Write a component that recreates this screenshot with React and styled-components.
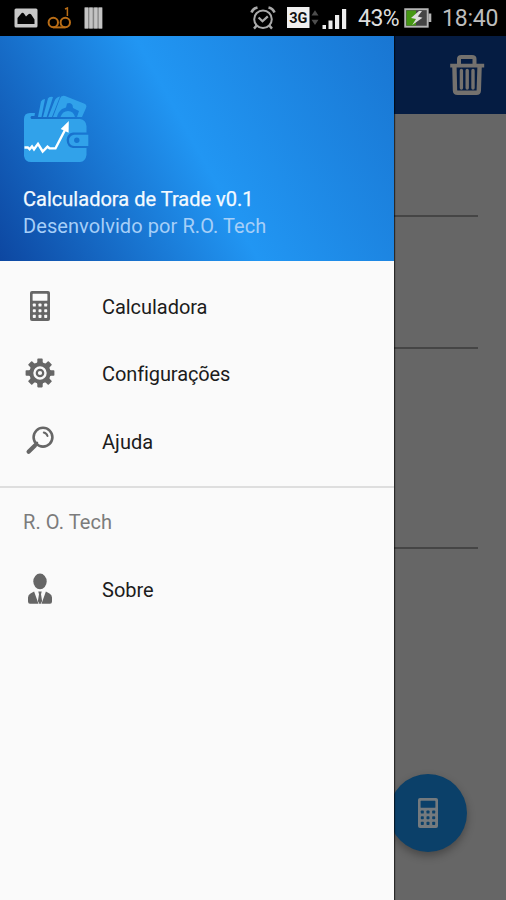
import React from "react";
import styled, { createGlobalStyle } from "styled-components";

const GlobalStyle = createGlobalStyle`
  * { box-sizing: border-box; }
  body { margin: 0; background: #000; font-family: Roboto, "Noto Sans", sans-serif; }
`;

const Screen = styled.div`
  width: 506px;
  height: 900px;
  overflow: hidden;
  display: flex;
  flex-direction: column;
`;

const StatusBar = styled.header`
  height: 36px;
  flex: none;
  background: #000;
  color: #c6c6c6;
  display: flex;
  align-items: center;
  justify-content: space-between;
  padding: 0 8px 0 14px;
`;

const StatusGroup = styled.div`
  display: flex;
  align-items: center;
  height: 36px;
`;

const StatusText = styled.span`
  font-size: 23px;
  line-height: 36px;
  padding-top: 1px;
  width: ${(p) => p.$width}px;
  margin-left: ${(p) => p.$gap}px;
  letter-spacing: ${(p) => p.$spacing || 0}px;
  color: ${(p) => p.$color || "#bdbdbd"};
  white-space: nowrap;
`;

const Glyph = styled.svg`
  display: block;
  flex: none;
  margin-left: ${(p) => p.$gap || 0}px;
`;

const Stage = styled.main`
  position: relative;
  flex: 1;
  background: #666;
`;

const AppBar = styled.div`
  height: 78px;
  background: #051c42;
  display: flex;
  align-items: center;
  justify-content: flex-end;
  padding-right: 20px;
`;

const Form = styled.div`
  display: flex;
  flex-direction: column;
  padding: 0 28px;
`;

const Field = styled.div`
  height: ${(p) => p.$height}px;
  border-bottom: 2px solid #454545;
`;

const Fab = styled.button`
  position: absolute;
  right: 39px;
  bottom: 48px;
  width: 78px;
  height: 78px;
  padding: 0;
  border: 0;
  border-radius: 50%;
  background: #0b4069;
  display: flex;
  align-items: center;
  justify-content: center;
  box-shadow: 0 4px 8px rgba(0, 0, 0, 0.3);
`;

const Drawer = styled.aside`
  position: absolute;
  top: 0;
  left: 0;
  bottom: 0;
  width: 394px;
  background: #fafafa;
  box-shadow: 1px 0 1px rgba(0, 0, 0, 0.6);
`;

const DrawerHeader = styled.div`
  height: 225px;
  padding: 58px 23px 0;
  background: linear-gradient(61deg, #0d47a1 0%, #2196f3 50%, #1976d2 100%);
`;

const AppTitle = styled.div`
  margin-top: 23px;
  font-size: 20px;
  line-height: 27px;
  -webkit-text-stroke: 0.25px #f4faff;
  letter-spacing: 0.02px;
  color: #f4faff;
  white-space: nowrap;
`;

const AppAuthor = styled.div`
  font-size: 20px;
  line-height: 27px;
  letter-spacing: 0.08px;
  color: #a6cff8;
  white-space: nowrap;
`;

const Menu = styled.nav`
  display: flex;
  flex-direction: column;
  padding-top: ${(p) => p.$top}px;
`;

const MenuItem = styled.a`
  height: 67.5px;
  padding-left: 24px;
  display: flex;
  align-items: center;
`;

const MenuLabel = styled.span`
  margin-left: 46px;
  padding-top: 2px;
  font-size: 20px;
  line-height: 28px;
  letter-spacing: ${(p) => p.$spacing}px;
  color: #1c1c1c;
`;

const Divider = styled.hr`
  margin: 11px 0 0;
  border: 0;
  height: 2px;
  background: #dedede;
`;

const SectionLabel = styled.div`
  padding: 19px 23px 0;
  font-size: 20px;
  line-height: 30px;
  letter-spacing: 0.08px;
  color: #7c7c7c;
`;

const CalculatorIcon = ({ color, hole }) => (
  <Glyph width="32" height="32" viewBox="0 0 32 32">
    <rect x="6" y="1" width="20" height="30" rx="2" fill={color} />
    <rect x="8.6" y="3.8" width="14.8" height="7" rx="0.6" fill={hole} />
    {[13.5, 19.2, 24.8].map((y) =>
      [8.8, 14.5, 20.2].map((x) => (
        <rect key={`${x}-${y}`} x={x} y={y} width="3" height="3.1" rx="0.7" fill={hole} />
      ))
    )}
  </Glyph>
);

const GearIcon = () => (
  <Glyph width="32" height="32" viewBox="-16 -16 32 32" fill="#666">
    {[0, 45, 90, 135, 180, 225, 270, 315].map((a) => (
      <path key={a} transform={`rotate(${a})`} d="M-3.5-8.5 L-2.7-11 V-13.6 Q-2.7-14.4-1.9-14.4 H1.9 Q2.7-14.4 2.7-13.6 V-11 L3.5-8.5Z" />
    ))}
    <circle r="8.7" fill="none" stroke="#666" strokeWidth="4" />
    <circle r="3.2" fill="none" stroke="#666" strokeWidth="2.2" />
  </Glyph>
);

const SearchIcon = () => (
  <Glyph width="32" height="32" viewBox="0 0 32 32" fill="none" stroke="#666" strokeLinecap="round">
    <circle cx="19" cy="12.2" r="9.4" strokeWidth="2.6" />
    <path d="M4.6 26.8 L11 20.4" strokeWidth="4.2" />
    <path d="M11 20 L13 18" strokeWidth="2.6" />
    <path d="M19.8 7.6 Q22.6 8.2 23.5 11" strokeWidth="2" />
  </Glyph>
);

const PersonIcon = () => (
  <Glyph width="32" height="32" viewBox="0 0 32 32" fill="#666">
    <ellipse cx="16" cy="8.4" rx="6.7" ry="7.8" />
    <path d="M10.1 18.5 L14.5 30.8 H6 Q4 30.8 4 28.6 V24.5 Q4 21.8 6.5 20.5Z" />
    <path d="M21.9 18.5 L17.5 30.8 H26 Q28 30.8 28 28.6 V24.5 Q28 21.8 25.5 20.5Z" />
    <path d="M14.3 18.5 H17.7 L17 21.3 L18.1 28 L16.8 30.8 H15.2 L13.9 28 L15 21.3Z" />
  </Glyph>
);

const WalletIcon = () => (
  <Glyph width="66" height="69" viewBox="0 0 66 69">
    <g fill="#31a2ea">
      <path d="M15 23 L18 7.5 Q19 5 22 5 L18.5 23Z" />
      <path d="M20 23 L25 4.5 Q26 2.2 30 3 L23.7 23Z" />
      <path d="M25.2 23 L31.5 7 Q33 3 37 2.5 L29 23Z" />
      <path d="M30 23 L37 4.5 Q38 1 42 2 L61 9.5 Q64.5 11 63 14 L59 23Z" />
      <path d="M1 25 Q1 19 7 19 H12 L11.5 22 H8.5 Q6.5 23.5 8.5 25 H57 Q63 26 63.5 32 V38.5 H50 Q44 39.5 43.6 46 Q44 53 50 54 H63.5 V61 Q62.5 67.5 57 68 H8 Q2 68 1 62Z" />
      <path d="M51 40.7 H65.3 V52 H51 Q46 51 46 46.4 Q46 41.7 51 40.7Z" />
    </g>
    <path d="M34 23 Q35 18 39 15 L43 13.5 L44 9.5 Q47.5 8 49.5 11 L50 14 L56 17 L54 23 H52 Q50.5 17 45 17 Q39.5 17 37.5 23Z" fill="#187ad6" />
    <circle cx="53.8" cy="46.3" r="2.7" fill="#1676d0" />
    <path d="M1.5 53.5 H4.8 L6.6 55.2 L9 52.4 L11 55.3 L15 49.8 L19.7 57.5 L24.5 52.7 L26.5 54.2 L32.5 54.4 L42.5 35" fill="none" stroke="#fff" strokeWidth="2.4" />
    <path d="M37.7 35 L45.8 27 L45.6 38.8Z" fill="#fff" />
  </Glyph>
);

const TrashIcon = () => (
  <Glyph width="38" height="42" viewBox="0 0 38 42" fill="none" stroke="#74716e">
    <path d="M11 10 V4.8 Q11 3 13.3 3 H24 Q26.5 3 26.5 4.8 V10" strokeWidth="4" />
    <path d="M2.2 11.6 H36.2" strokeWidth="3.8" />
    <path d="M6.4 12 L7 36.5 Q7.2 38.8 9.5 38.8 H28.5 Q30.6 38.8 30.8 36.5 L31.6 12" strokeWidth="4.4" />
    <path d="M13.4 16.5 V34 M19.2 16.5 V34 M25 16.5 V34" strokeWidth="3.4" strokeLinecap="round" />
  </Glyph>
);

const PhotoIcon = () => (
  <Glyph width="24" height="20" viewBox="0 0 24 20">
    <rect x="0.5" y="0.5" width="23" height="19" rx="1.5" fill="#c8c8c8" />
    <path d="M3.5 16 V10 L7.7 5 Q9 4.2 10.3 6 L12 8.4 L14.4 6.3 Q16 5.2 17.2 6.6 L20.5 11.5 V16Z" fill="#050505" />
  </Glyph>
);

const VoicemailIcon = () => (
  <Glyph $gap={9} width="25" height="22" viewBox="0 0 25 22" fill="none" stroke="#b96d16">
    <circle cx="6.3" cy="15.5" r="4.7" strokeWidth="2" />
    <circle cx="18.3" cy="15.5" r="4.7" strokeWidth="2" />
    <path d="M6.3 20.4 H18.3" strokeWidth="2" />
    <path d="M18 2 L20.4 1 V9" strokeWidth="1.5" />
  </Glyph>
);

const StripesIcon = () => (
  <Glyph $gap={12} width="19" height="22" viewBox="0 0 19 22">
    <rect x="0.5" y="0.5" width="18" height="21" fill="#858585" />
    <path d="M2.4 0.5 V21.5 M7 0.5 V21.5 M11.8 0.5 V21.5 M16.4 0.5 V21.5" stroke="#c4c4c4" strokeWidth="3.3" />
  </Glyph>
);

const AlarmIcon = () => (
  <Glyph width="26" height="24" viewBox="0 0 26 24" fill="none" stroke="#aaa">
    <circle cx="13" cy="13.2" r="8.8" strokeWidth="2" />
    <path d="M1.5 6.5 Q3 2.5 7.5 1.5 M24.5 6.5 Q23 2.5 18.5 1.5" strokeWidth="2.6" />
    <path d="M6.6 19.6 L4 22.6 M19.4 19.6 L22 22.6" strokeWidth="2.4" />
    <path d="M8.6 11.5 L12.5 15.3 L17.8 10.4" strokeWidth="2.2" />
  </Glyph>
);

const NetworkIcon = () => (
  <Glyph $gap={11} width="33" height="22" viewBox="0 0 33 22">
    <rect width="22.5" height="21" fill="#f0f0f0" />
    <text x="11.3" y="16" textAnchor="middle" fontFamily="Roboto" fontSize="14.5" fontWeight="700" fill="#111">3G</text>
    <path d="M24.5 8.5 L28 3.2 L31.5 8.5Z M24.5 12.8 H31.5 L28 18Z" fill="#4d4d4d" />
  </Glyph>
);

const SignalIcon = () => (
  <Glyph $gap={2} width="25" height="24" viewBox="0 0 25 24">
    <path d="M0.5 19 H4 V23 H0.5Z M6.5 14.5 H10.5 V23 H6.5Z" fill="#eee" />
    <path d="M13 9 H17.2 V23 H13Z M20 3 H24.2 V23 H20Z" fill="#eee" />
  </Glyph>
);

const BatteryIcon = () => (
  <Glyph $gap={4} width="28" height="20" viewBox="0 0 28 20">
    <rect x="1.2" y="1.2" width="22.5" height="17.5" fill="#444" stroke="#b5b5b5" strokeWidth="1.9" />
    <rect x="2.5" y="2.5" width="9.5" height="15" fill="#459713" />
    <path d="M24.5 5.5 H27.3 V14 H24.5Z" fill="#b5b5b5" />
    <path d="M15 3 L7 10 L12 11 L8.2 17 L18.5 9.8 L13.8 8.6 L18 3Z" fill="#ddd" />
  </Glyph>
);

export default function App() {
  return (
    <>
      <GlobalStyle />
      <Screen>
        <StatusBar>
          <StatusGroup>
            <PhotoIcon />
            <VoicemailIcon />
            <StripesIcon />
          </StatusGroup>
          <StatusGroup>
            <AlarmIcon />
            <NetworkIcon />
            <SignalIcon />
            <StatusText $gap={11} $width={42} $spacing={-0.5} $color="#dedede">43%</StatusText>
            <BatteryIcon />
            <StatusText $gap={10} $width={56} $spacing={-0.2}>18:40</StatusText>
          </StatusGroup>
        </StatusBar>
        <Stage>
          <AppBar><TrashIcon /></AppBar>
          <Form>
            <Field $height={103} />
            <Field $height={132} />
            <Field $height={200} />
          </Form>
          <Fab aria-label="Calcular"><CalculatorIcon color="#747a7e" hole="#0b4069" /></Fab>
          <Drawer>
            <DrawerHeader>
              <WalletIcon />
              <AppTitle>Calculadora de Trade v0.1</AppTitle>
              <AppAuthor>Desenvolvido por R.O. Tech</AppAuthor>
            </DrawerHeader>
            <Menu $top={11}>
              <MenuItem><CalculatorIcon color="#666" hole="#fafafa" /><MenuLabel $spacing={-0.05}>Calculadora</MenuLabel></MenuItem>
              <MenuItem><GearIcon /><MenuLabel $spacing={-0.1}>Configurações</MenuLabel></MenuItem>
              <MenuItem><SearchIcon /><MenuLabel $spacing={0.05}>Ajuda</MenuLabel></MenuItem>
            </Menu>
            <Divider />
            <SectionLabel>R. O. Tech</SectionLabel>
            <Menu $top={19}>
              <MenuItem><PersonIcon /><MenuLabel $spacing={0}>Sobre</MenuLabel></MenuItem>
            </Menu>
          </Drawer>
        </Stage>
      </Screen>
    </>
  );
}
